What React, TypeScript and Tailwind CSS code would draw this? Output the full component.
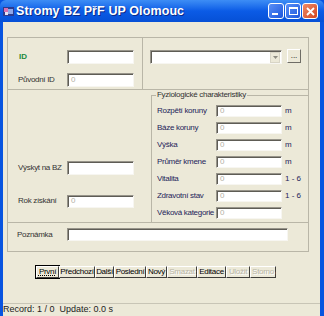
import React from "react";

// sunken edit box, classic XP look
function Field({ className, value }: { className: string; value?: string }) {
  return (
    <div
      className={`flex items-center bg-white border border-t-[#97948a] border-l-[#97948a] border-b-[#f7f6f1] border-r-[#f7f6f1] shadow-[inset_1px_1px_0_#5e5c55] pl-[3px] text-[8px] leading-none text-[#b3b1a6] ${className}`}
    >
      {value}
    </div>
  );
}

function Row({ label, field, unit }: { label: string; field: string; unit?: string }) {
  return (
    <div className="flex items-center h-[12px]">
      <div className="w-[64px] pl-[5px] text-[8px] tracking-[-0.3px] text-[#24245a] whitespace-nowrap">{label}</div>
      <Field className="w-[66px] h-[12px]" value={field} />
      {unit && <div className="ml-[3px] text-[8px] text-[#24245a] whitespace-nowrap">{unit}</div>}
    </div>
  );
}

const physio = [
  { label: "Rozpětí koruny", unit: "m" },
  { label: "Báze koruny", unit: "m" },
  { label: "Výška", unit: "m" },
  { label: "Průměr kmene", unit: "m" },
  { label: "Vitalita", unit: "1 - 6" },
  { label: "Zdravotní stav", unit: "1 - 6" },
  { label: "Věková kategorie" },
];

const navButtons = [
  { label: "První", w: "w-[23px]", focus: true },
  { label: "Předchozí", w: "w-[36px]" },
  { label: "Další", w: "w-[19px]" },
  { label: "Poslední", w: "w-[32px]" },
  { label: "Nový", w: "w-[21px]" },
  { label: "Smazat", w: "w-[30px]", disabled: true },
  { label: "Editace", w: "w-[29px]" },
  { label: "Uložit", w: "w-[24px]", disabled: true },
  { label: "Storno", w: "w-[26px]", disabled: true },
];

export default function App() {
  return (
    <div className="w-[324px] h-[316px] flex flex-col bg-[#0854e0] font-['Liberation_Sans',Arial,sans-serif] overflow-hidden">
      {/* title bar */}
      <div className="h-[22px] flex items-center bg-gradient-to-b from-[#3d8df5] via-[#0b5be6] to-[#0650d6] rounded-t-[6px]">
        <svg width="11" height="11" viewBox="0 0 11 11" className="ml-[3px]">
          <rect x="0" y="1" width="11" height="9" fill="#2b3b8f" />
          <rect x="1" y="2" width="4" height="4" fill="#d86fb0" />
          <rect x="5" y="3" width="5" height="5" fill="#8fa7e8" />
          <rect x="2" y="6" width="3" height="3" fill="#e8e2f2" />
        </svg>
        <span className="ml-[2px] text-white font-bold text-[12.5px] tracking-[0.1px] [text-shadow:1px_1px_0_#0a2a8a]">
          Stromy BZ PřF UP Olomouc
        </span>
        <div className="ml-auto mr-[6px] flex gap-[1px]">
          <div className="w-[16px] h-[16px] rounded-[3px] border border-white bg-gradient-to-br from-[#5a8ff6] to-[#1d55dc] flex items-end pl-[3px] pb-[3px]">
            <div className="w-[6px] h-[2px] bg-white" />
          </div>
          <div className="w-[16px] h-[16px] rounded-[3px] border border-white bg-gradient-to-br from-[#5a8ff6] to-[#1d55dc] flex items-center justify-center">
            <div className="w-[9px] h-[8px] border border-white border-t-2" />
          </div>
          <div className="w-[16px] h-[16px] rounded-[3px] border border-white bg-gradient-to-br from-[#ee8a66] to-[#d4431c] flex items-center justify-center">
            <svg width="9" height="9" viewBox="0 0 9 9">
              <path d="M1 1 L8 8 M8 1 L1 8" stroke="white" strokeWidth="1.8" />
            </svg>
          </div>
        </div>
      </div>

      <div className="flex-1 flex">
        <div className="w-[3px]" />
        <div className="flex-1 bg-[#ece9d8] flex flex-col">
          {/* form frame */}
          <div className="mt-[15px] ml-[4px] w-[302px] h-[215px] border border-[#b9b6a7] flex flex-col">
            <div className="h-[52px] flex border-b border-[#b9b6a7]">
              <div className="w-[135px] border-r border-[#b9b6a7] pt-[12px] flex flex-col gap-[9px]">
                <div className="flex items-center h-[14px]">
                  <div className="w-[59px] pl-[11px] text-[8px] font-bold text-[#1a8a3c]">ID</div>
                  <Field className="w-[67px] h-[14px]" />
                </div>
                <div className="flex items-center h-[14px]">
                  <div className="w-[59px] pl-[10px] text-[8px] tracking-[-0.3px] text-[#333]">Původní ID</div>
                  <Field className="w-[67px] h-[14px]" value="0" />
                </div>
              </div>
              <div className="flex-1 pt-[12px] pl-[7px] flex items-start">
                <div className="w-[132px] h-[14px] flex bg-white border border-t-[#97948a] border-l-[#97948a] border-b-[#f7f6f1] border-r-[#f7f6f1] shadow-[inset_1px_1px_0_#5e5c55]">
                  <div className="flex-1" />
                  <div className="w-[10px] h-[11px] mt-[1px] mr-[1px] bg-[#ece9d8] border border-[#d8d5c6] flex items-center justify-center">
                    <svg width="5" height="3" viewBox="0 0 5 3">
                      <path d="M0 0 H5 L2.5 3 Z" fill="#8e8c82" />
                    </svg>
                  </div>
                </div>
                <div className="ml-[5px] -mt-[1px] w-[14px] h-[14px] bg-[#ece9d8] border border-t-white border-l-white border-b-[#6f6d66] border-r-[#6f6d66] flex items-end justify-center pb-[2px] text-[8px] leading-none text-black">
                  ...
                </div>
              </div>
            </div>

            <div className="h-[133px] flex border-b border-[#b9b6a7]">
              <div className="w-[143px] pt-[71px] flex flex-col gap-[19px]">
                <div className="flex items-center h-[14px]">
                  <div className="w-[59px] pl-[10px] text-[8px] tracking-[-0.3px] text-[#333]">Výskyt na BZ</div>
                  <Field className="w-[67px] h-[14px]" />
                </div>
                <div className="flex items-center h-[14px]">
                  <div className="w-[59px] pl-[10px] text-[8px] tracking-[-0.3px] text-[#333]">Rok získání</div>
                  <Field className="w-[67px] h-[13px]" value="0" />
                </div>
              </div>
              <fieldset className="w-[157px] h-full border border-r-0 border-b-0 border-[#b9b6a7] p-0 m-0 min-w-0">
                <legend className="ml-[4px] px-[1px] h-[10px] text-[8px] leading-[10px] tracking-[-0.3px] text-[#333]">
                  Fyziologické charakteristiky
                </legend>
                <div className="pt-[5px] flex flex-col gap-[5px]">
                  {physio.map((p) => (
                    <Row key={p.label} label={p.label} field="0" unit={p.unit} />
                  ))}
                </div>
              </fieldset>
            </div>

            <div className="flex-1 flex items-start pt-[5px]">
              <div className="w-[59px] h-[13px] flex items-center pl-[9px] text-[8px] tracking-[-0.3px] text-[#333]">Poznámka</div>
              <Field className="w-[221px] h-[13px]" />
            </div>
          </div>

          {/* navigation buttons */}
          <div className="mt-[14px] ml-[33px] flex h-[12px]">
            {navButtons.map((b) => (
              <div
                key={b.label}
                className={`${b.w} h-[12px] flex items-center justify-center text-[8px] leading-none tracking-[-0.3px] bg-[#ece9d8] border border-t-white border-l-white border-b-[#3f3e3a] border-r-[#3f3e3a] ${
                  b.focus ? "outline outline-1 outline-black" : ""
                } ${b.disabled ? "text-[#b8b5a6] [text-shadow:1px_1px_0_#fff]" : "text-black"}`}
              >
                <span className={b.focus ? "underline decoration-dotted" : ""}>{b.label}</span>
              </div>
            ))}
          </div>

          <div className="flex-1" />
          {/* status bar */}
          <div className="h-[13px] border-t border-[#c8c5b6] flex items-center text-[9px] text-[#222] whitespace-pre">
            Record: 1 / 0  Update: 0.0 s
          </div>
        </div>
        <div className="w-[4px]" />
      </div>
    </div>
  );
}
